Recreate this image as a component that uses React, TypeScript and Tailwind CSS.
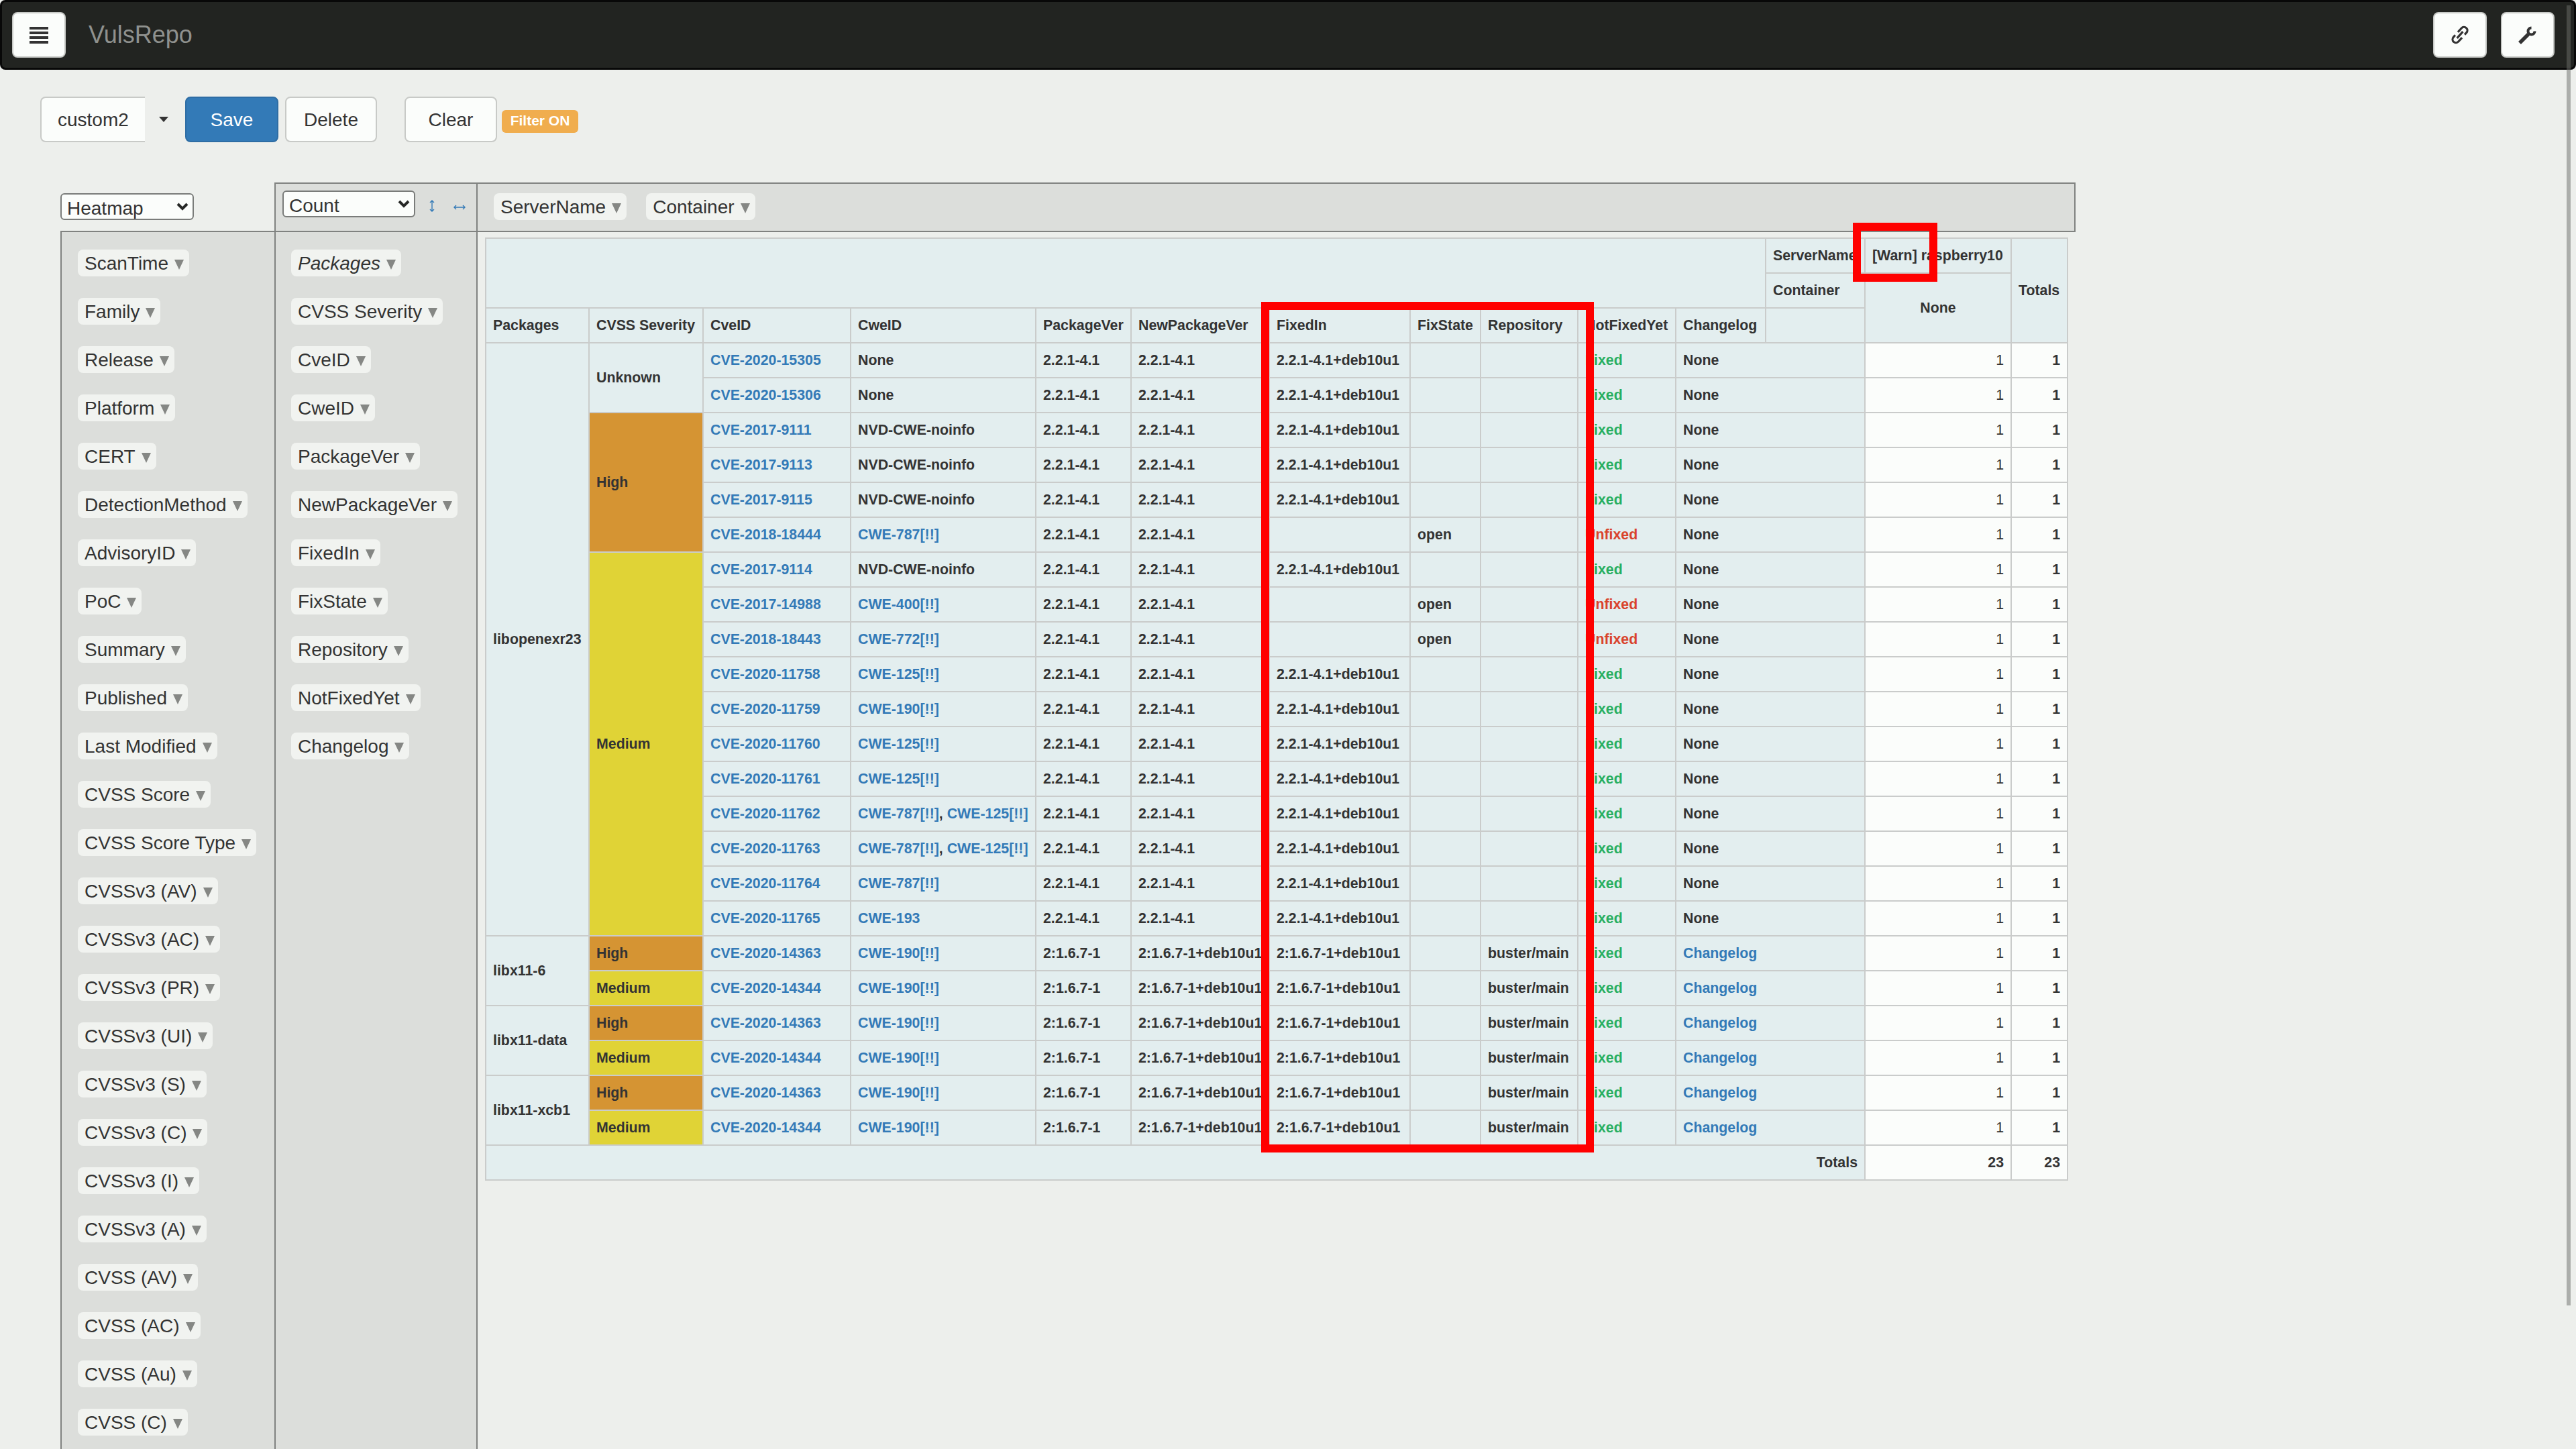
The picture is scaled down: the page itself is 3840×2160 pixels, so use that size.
const leftFields = [
  "ScanTime", "Family", "Release", "Platform", "CERT", "DetectionMethod", "AdvisoryID", "PoC", "Summary",
  "Published", "Last Modified", "CVSS Score", "CVSS Score Type", "CVSSv3 (AV)", "CVSSv3 (AC)", "CVSSv3 (PR)",
  "CVSSv3 (UI)", "CVSSv3 (S)", "CVSSv3 (C)", "CVSSv3 (I)", "CVSSv3 (A)", "CVSS (AV)", "CVSS (AC)", "CVSS (Au)", "CVSS (C)",
];

const rowFields = [
  "Packages", "CVSS Severity", "CveID", "CweID", "PackageVer", "NewPackageVer", "FixedIn", "FixState", "Repository", "NotFixedYet", "Changelog",
];

const colWidths = [154, 170, 220, 276, 142, 206, 210, 105, 145, 146, 134, 148, 218, 84];

interface Row {
  pkg?: [string, number];
  sev?: [string, number];
  cve: string;
  cwe: string[] | string;
  ver: string;
  newVer: string;
  fixedIn: string;
  fixState: string;
  repo: string;
  fixed: boolean;
  changelog: boolean;
}

const openexr = (cve: string, cwe: string[] | string, extra: Partial<Row> = {}): Row => ({
  cve,
  cwe,
  ver: "2.2.1-4.1",
  newVer: "2.2.1-4.1",
  fixedIn: "2.2.1-4.1+deb10u1",
  fixState: "",
  repo: "",
  fixed: true,
  changelog: false,
  ...extra,
});

const open = { fixedIn: "", fixState: "open", fixed: false };

const libx = (cve: string, extra: Partial<Row> = {}): Row => ({
  cve,
  cwe: ["CWE-190[!!]"],
  ver: "2:1.6.7-1",
  newVer: "2:1.6.7-1+deb10u1",
  fixedIn: "2:1.6.7-1+deb10u1",
  fixState: "",
  repo: "buster/main",
  fixed: true,
  changelog: true,
  ...extra,
});

const rows: Row[] = [
  openexr("CVE-2020-15305", "None", { pkg: ["libopenexr23", 17], sev: ["Unknown", 2] }),
  openexr("CVE-2020-15306", "None"),
  openexr("CVE-2017-9111", "NVD-CWE-noinfo", { sev: ["High", 4] }),
  openexr("CVE-2017-9113", "NVD-CWE-noinfo"),
  openexr("CVE-2017-9115", "NVD-CWE-noinfo"),
  openexr("CVE-2018-18444", ["CWE-787[!!]"], open),
  openexr("CVE-2017-9114", "NVD-CWE-noinfo", { sev: ["Medium", 11] }),
  openexr("CVE-2017-14988", ["CWE-400[!!]"], open),
  openexr("CVE-2018-18443", ["CWE-772[!!]"], open),
  openexr("CVE-2020-11758", ["CWE-125[!!]"]),
  openexr("CVE-2020-11759", ["CWE-190[!!]"]),
  openexr("CVE-2020-11760", ["CWE-125[!!]"]),
  openexr("CVE-2020-11761", ["CWE-125[!!]"]),
  openexr("CVE-2020-11762", ["CWE-787[!!]", "CWE-125[!!]"]),
  openexr("CVE-2020-11763", ["CWE-787[!!]", "CWE-125[!!]"]),
  openexr("CVE-2020-11764", ["CWE-787[!!]"]),
  openexr("CVE-2020-11765", ["CWE-193"]),
  libx("CVE-2020-14363", { pkg: ["libx11-6", 2], sev: ["High", 1] }),
  libx("CVE-2020-14344", { sev: ["Medium", 1] }),
  libx("CVE-2020-14363", { pkg: ["libx11-data", 2], sev: ["High", 1] }),
  libx("CVE-2020-14344", { sev: ["Medium", 1] }),
  libx("CVE-2020-14363", { pkg: ["libx11-xcb1", 2], sev: ["High", 1] }),
  libx("CVE-2020-14344", { sev: ["Medium", 1] }),
];

const cell = "border-2 border-[#cacccb] px-[10px] py-0 align-middle whitespace-nowrap overflow-visible font-bold";
const link = "text-[#337ab7]";

function sevColor(sev: string) {
  if (sev === "High") return "bg-[#d59433]";
  if (sev === "Medium") return "bg-[#e0d336]";
  return "bg-[#e3eeef]";
}

function Chip({ label, italic }: { label: string; italic?: boolean }) {
  return (
    <div className={`flex h-[40px] items-center gap-[9px] rounded-[8px] bg-[#f1f3f0] pl-[10px] pr-[8px] pt-[2px] text-[#333] ${italic ? "italic" : ""}`}>
      <span className="whitespace-nowrap">{label}</span>
      <svg width="14" height="15" viewBox="0 0 14 15" className="mt-[2px] shrink-0">
        <polygon points="0,0 14,0 7,15" fill="#858784" />
      </svg>
    </div>
  );
}

function Chevron() {
  return (
    <svg width="18" height="14" viewBox="0 0 18 14" className="absolute right-[8px] top-[13px]">
      <path d="M2 3l7 7 7-7" fill="none" stroke="#262826" strokeWidth="4" />
    </svg>
  );
}

function Select({ value, options, width }: { value: string; options: string[]; width: string }) {
  return (
    <div className={`relative h-[40px] ${width}`}>
      <select
        defaultValue={value}
        className="h-full w-full appearance-none rounded-[6px] border-2 border-[#7a7c7a] bg-[#fbfdfb] pl-[8px] text-[#333] outline-none"
      >
        {options.map((o) => (
          <option key={o}>{o}</option>
        ))}
      </select>
      <Chevron />
    </div>
  );
}

function NavButton({ children }: { children: React.ReactNode }) {
  return (
    <button className="flex h-[68px] w-[80px] items-center justify-center rounded-[8px] border-2 border-[#c8cac7] bg-[#fbfdfb] text-[#333]">
      {children}
    </button>
  );
}

function ToolButton({ label, className }: { label: string; className: string }) {
  return (
    <button className={`h-[68px] rounded-[8px] border-2 pt-[2px] ${className}`}>{label}</button>
  );
}

function PivotTable() {
  return (
    <table className="table-fixed border-collapse bg-[#e3eeef] text-[21.33px] leading-[24px] text-[#333] w-[2358px]">
      <colgroup>
        {colWidths.map((w, i) => (
          <col key={i} style={{ width: w }} />
        ))}
      </colgroup>
      <thead>
        <tr className="h-[52px]">
          <th colSpan={11} rowSpan={2} className={cell}></th>
          <th className={`${cell} text-left`}>ServerName</th>
          <th className={`${cell} text-left`}>[Warn] raspberry10</th>
          <th rowSpan={3} className={`${cell} text-left`}>Totals</th>
        </tr>
        <tr className="h-[52px]">
          <th className={`${cell} text-left`}>Container</th>
          <th rowSpan={2} className={`${cell} text-center`}>None</th>
        </tr>
        <tr className="h-[52px]">
          {rowFields.map((f) => (
            <th key={f} className={`${cell} text-left`}>{f}</th>
          ))}
          <th className={cell}></th>
        </tr>
      </thead>
      <tbody>
        {rows.map((r, i) => (
          <tr key={i} className="h-[52px]">
            {r.pkg && <th rowSpan={r.pkg[1]} className={`${cell} text-left`}>{r.pkg[0]}</th>}
            {r.sev && <th rowSpan={r.sev[1]} className={`${cell} text-left ${sevColor(r.sev[0])}`}>{r.sev[0]}</th>}
            <td className={cell}><span className={link}>{r.cve}</span></td>
            <td className={cell}>
              {typeof r.cwe === "string" ? (
                r.cwe
              ) : (
                r.cwe.map((c, j) => (
                  <span key={j}>
                    {j > 0 && ", "}
                    <span className={link}>{c}</span>
                  </span>
                ))
              )}
            </td>
            <td className={cell}>{r.ver}</td>
            <td className={cell}>{r.newVer}</td>
            <td className={cell}>{r.fixedIn}</td>
            <td className={cell}>{r.fixState}</td>
            <td className={cell}>{r.repo}</td>
            <td className={cell}>
              {r.fixed ? <span className="text-[#27ae60]">Fixed</span> : <span className="text-[#d9432c]">Unfixed</span>}
            </td>
            <td colSpan={2} className={cell}>
              {r.changelog ? <span className={link}>Changelog</span> : "None"}
            </td>
            <td className={`${cell} bg-[#fbfdfb] text-right !font-normal`}>1</td>
            <td className={`${cell} bg-[#fbfdfb] text-right`}>1</td>
          </tr>
        ))}
        <tr className="h-[52px]">
          <th colSpan={12} className={`${cell} text-right`}>Totals</th>
          <td className={`${cell} bg-[#fbfdfb] text-right`}>23</td>
          <td className={`${cell} bg-[#fbfdfb] text-right`}>23</td>
        </tr>
      </tbody>
    </table>
  );
}

export default function App() {
  return (
    <div className="relative h-[2160px] w-[3840px] overflow-hidden bg-[#edefec] font-['Liberation_Sans',Arial,sans-serif] text-[28px] text-[#333]">
      <nav className="flex h-[104px] items-center justify-between rounded-[8px] border-[3px] border-[#080808] bg-[#222421] pl-[15px] pr-[29px]">
        <div className="flex items-center gap-[34px]">
          <NavButton>
            <span className="flex w-[28px] flex-col gap-[3px]">
              <span className="h-[4px] bg-[#333]" />
              <span className="h-[4px] bg-[#333]" />
              <span className="h-[4px] bg-[#333]" />
              <span className="h-[4px] bg-[#333]" />
            </span>
          </NavButton>
          <span className="text-[36px] text-[#8f918e]">VulsRepo</span>
        </div>
        <div className="flex items-center gap-[21px]">
          <NavButton>
            <svg width="36" height="36" viewBox="0 0 36 36" fill="none" stroke="#333" strokeWidth="3.2">
              <g transform="rotate(-48 18 18)">
                <path d="M13 13H9a5 5 0 0 0 0 10h8" />
                <path d="M23 23h4a5 5 0 0 0 0-10h-8" />
                <path d="M11.5 18h13" />
              </g>
            </svg>
          </NavButton>
          <NavButton>
            <svg width="28" height="28" viewBox="0 0 28 28" fill="none" stroke="#333">
              <path d="M2 26L15 13" strokeWidth="5.5" />
              <path d="M19.5 3.5A5 5 0 1 0 24.5 8.5" strokeWidth="4" />
            </svg>
          </NavButton>
        </div>
      </nav>

      <div className="ml-[60px] mt-[40px] flex items-start">
        <div className="flex h-[68px] w-[208px]">
          <div className="flex w-[156px] items-center rounded-l-[8px] border-2 border-[#c8cac7] border-r-0 bg-[#fbfdfb] pl-[24px] pt-[2px]">custom2</div>
          <div className="flex flex-1 items-center justify-center pl-[3px]">
            <svg width="14" height="8" viewBox="0 0 14 8">
              <polygon points="0,0 14,0 7,8" fill="#333" />
            </svg>
          </div>
        </div>
        <ToolButton label="Save" className="ml-[8px] w-[139px] border-[#2e6da4] bg-[#337ab7] text-white" />
        <ToolButton label="Delete" className="ml-[10px] w-[137px] border-[#c8cac7] bg-[#fbfdfb]" />
        <ToolButton label="Clear" className="ml-[41px] w-[138px] border-[#c8cac7] bg-[#fbfdfb]" />
        <span className="ml-[7px] mt-[20px] flex h-[34px] w-[114px] items-center justify-center rounded-[6px] bg-[#f0ad4e] pb-[3px] text-[21px] font-bold text-white">
          Filter ON
        </span>
      </div>

      <div className="ml-[90px] mt-[60px] grid w-[3004px] grid-cols-[319px_301px_1fr] grid-rows-[72px_1900px]">
        <div className="pt-[16px]">
          <Select value="Heatmap" options={["Heatmap"]} width="w-[199px]" />
        </div>
        <div className="flex items-start border-l-2 border-t-2 border-[#808280] bg-[#dcdedb] pl-[10px] pt-[10px]">
          <Select value="Count" options={["Count"]} width="w-[198px]" />
          <svg width="10" height="18" viewBox="0 0 10 18" fill="none" stroke="#337ab7" strokeWidth="1.4" className="ml-[20px] mt-[14px]">
            <path d="M5 1v16M2 4l3-3 3 3M2 14l3 3 3-3" />
          </svg>
          <svg width="18" height="10" viewBox="0 0 18 10" fill="none" stroke="#337ab7" strokeWidth="1.4" className="ml-[27px] mt-[20px]">
            <path d="M1 5h16M4 2L1 5l3 3M14 2l3 3-3 3" />
          </svg>
        </div>
        <div className="flex items-start gap-[29px] border-x-2 border-t-2 border-[#808280] bg-[#dcdedb] pl-[24px] pt-[14px]">
          <Chip label="ServerName" />
          <Chip label="Container" />
        </div>
        <div className="flex flex-col items-start gap-[32px] border-l-2 border-t-2 border-[#808280] bg-[#dcdedb] pl-[24px] pt-[26px]">
          {leftFields.map((f) => (
            <Chip key={f} label={f} />
          ))}
        </div>
        <div className="flex flex-col items-start gap-[32px] border-l-2 border-t-2 border-[#808280] bg-[#dcdedb] pl-[23px] pt-[26px]">
          {rowFields.map((f) => (
            <Chip key={f} label={f} italic={f === "Packages"} />
          ))}
        </div>
        <div className="border-l-2 border-t-2 border-[#808280] pl-[11px] pt-[8px]">
          <PivotTable />
        </div>
      </div>

      {/* red annotations over the table */}
      <div className="absolute left-[1880px] top-[450px] h-[1268px] w-[496px] border-[12px] border-[#ff0000]" />
      <div className="absolute left-[2762px] top-[332px] h-[88px] w-[126px] border-[12px] border-[#ff0000]" />

      {/* scrollbar thumb */}
      <div className="absolute left-[3826px] top-[8px] h-[1938px] w-[6px] bg-[#6b6d6a]/50" />
    </div>
  );
}
